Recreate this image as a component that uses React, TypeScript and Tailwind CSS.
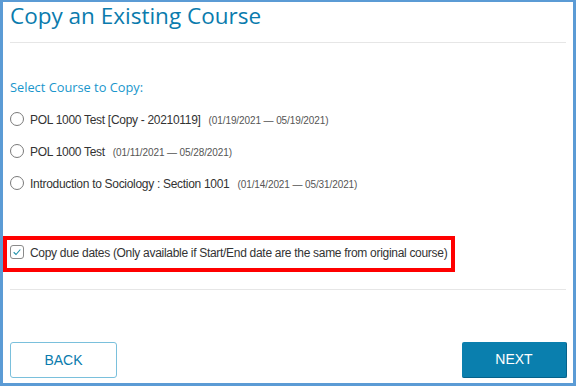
const courses = [
  { name: "POL 1000 Test [Copy - 20210119]", dates: "(01/19/2021 \u2014 05/19/2021)" },
  { name: "POL 1000 Test", dates: "(01/11/2021 \u2014 05/28/2021)" },
  { name: "Introduction to Sociology : Section 1001", dates: "(01/14/2021 \u2014 05/31/2021)" },
];

function Radio() {
  return <span className="h-[14px] w-[14px] shrink-0 rounded-full border border-[#7a7a7a] bg-white" />;
}

export default function App() {
  return (
    <div className="flex h-[386px] w-[576px] flex-col border-t-2 border-r-[3px] border-b-[3px] border-l-[3px] border-[#5b9bd5] bg-white font-['Liberation_Sans',Arial,sans-serif] text-[12px] tracking-[-0.3px] text-[#333]">
      <div className="px-[7px]">
        <h1 className="h-[26px] font-['Open_Sans',sans-serif] text-[22.5px] leading-[27px] font-normal tracking-normal text-[#0a7bad]">
          Copy an Existing Course
        </h1>
        <div className="mt-[14px] h-px bg-[#e6e6e6]" />

        <h2 className="mt-[34px] font-['Open_Sans',sans-serif] text-[12.8px] leading-[20px] tracking-normal text-[#1a96cc]">
          Select Course to Copy:
        </h2>

        <div className="mt-[6px]">
          {courses.map((c) => (
            <label key={c.name} className="flex h-[32px] items-center">
              <Radio />
              <span className="ml-[6px] pt-[2px]">{c.name}</span>
              <span className="ml-[8px] pt-[2px] text-[10px] tracking-[-0.1px] text-[#555]">{c.dates}</span>
            </label>
          ))}
        </div>
      </div>

      <div className="mt-[37px] flex h-[36px] w-[452px] items-center border-4 border-[#ff0000] pb-[4px] pl-[3px]">
        <span className="flex h-[14px] w-[14px] shrink-0 items-center justify-center rounded-[3px] border border-[#8a8a8a]">
          <svg viewBox="0 0 12 12" className="h-[10px] w-[10px]" fill="none" stroke="#1c8fa8" strokeWidth="1.3">
            <path d="M2 6.3 L4.8 9 L10 3" />
          </svg>
        </span>
        <span className="ml-[6px] pt-[2px] whitespace-nowrap">
          Copy due dates (Only available if Start/End date are the same from original course)
        </span>
      </div>

      <div className="px-[7px]">
        <div className="mt-[17px] h-px bg-[#e6e6e6]" />
      </div>

      <div className="flex-1" />

      <div className="flex items-center justify-between pr-[6px] pb-[5px] pl-[7px]">
        <button className="flex h-[36px] w-[107px] items-center justify-center rounded-[3px] border-[1.5px] border-[#7ac0dc] bg-white text-[14px] tracking-normal text-[#0a7bad]">
          BACK
        </button>
        <button className="flex h-[36px] w-[105px] items-center justify-center rounded-[2px] border-r border-b border-[#06628a] bg-[#0a7fae] text-[14px] tracking-normal text-white">
          NEXT
        </button>
      </div>
    </div>
  );
}
